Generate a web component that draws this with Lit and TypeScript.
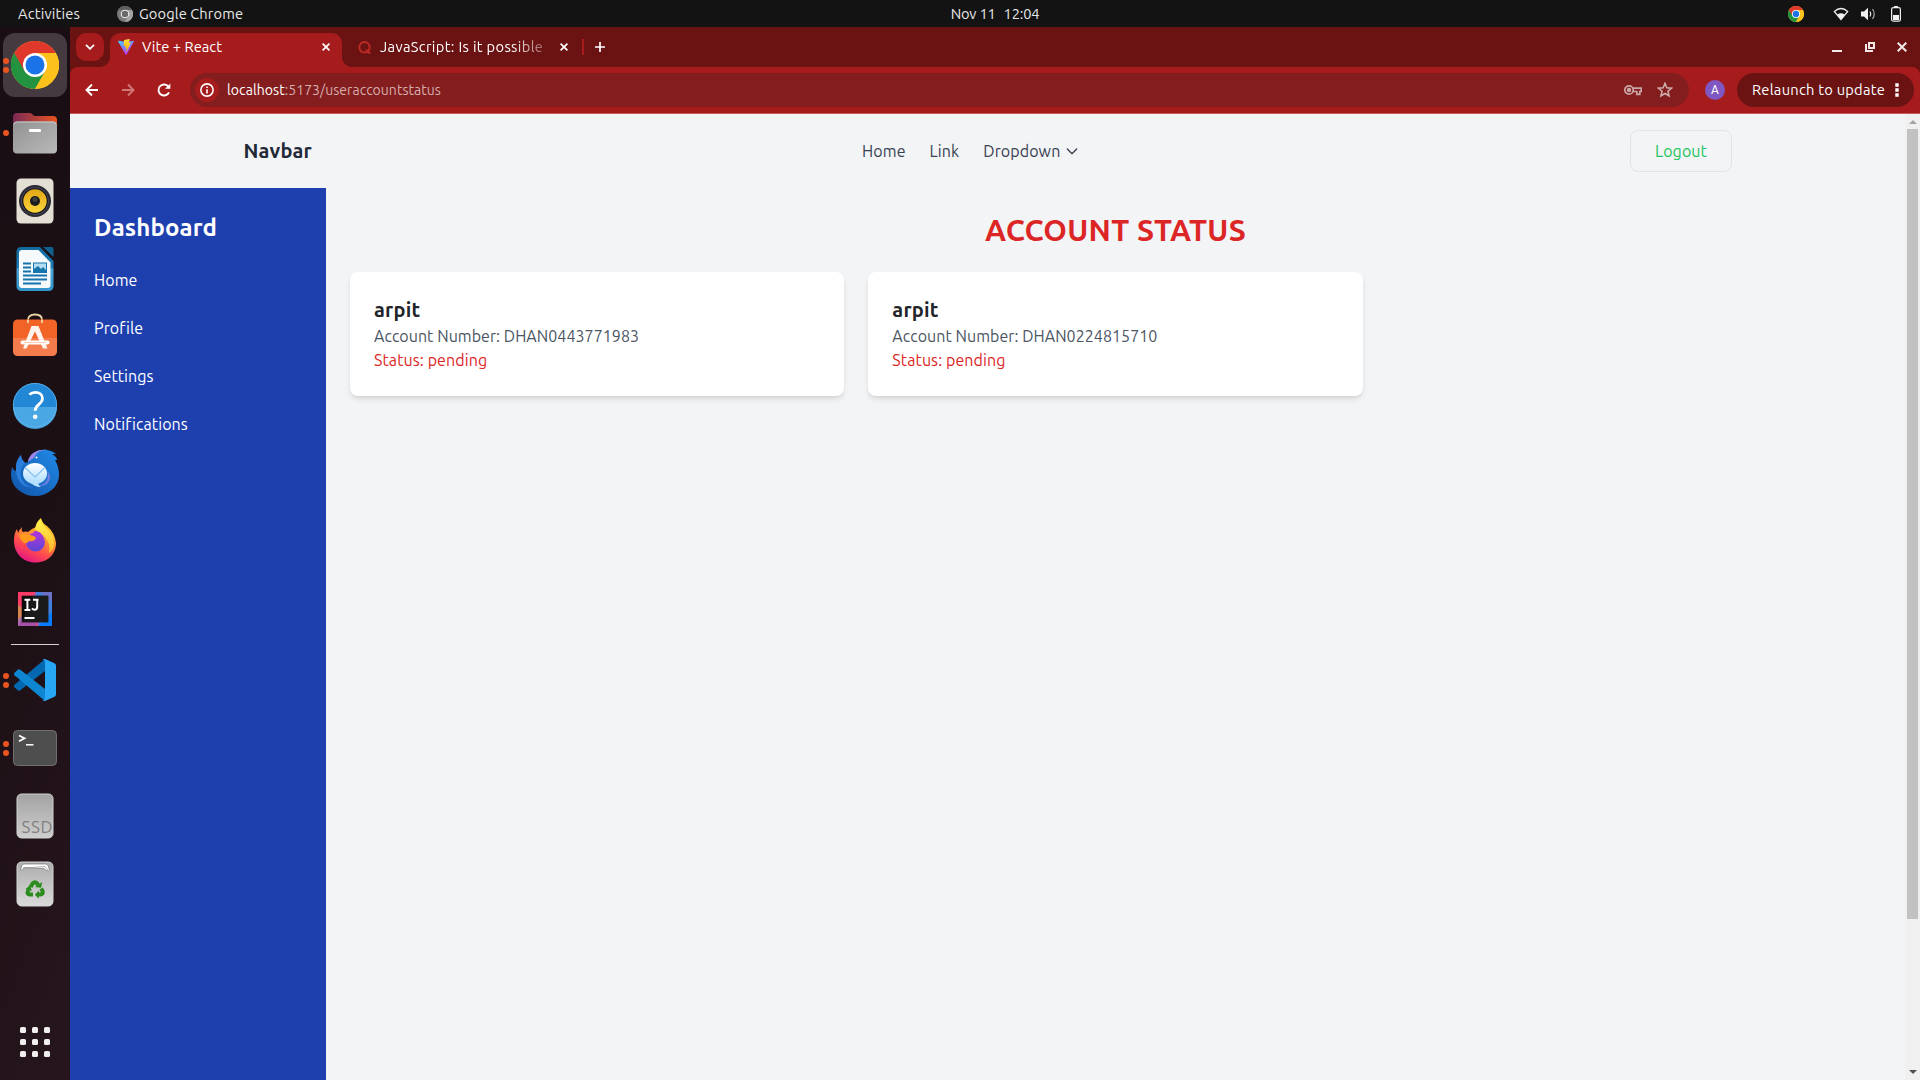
import { LitElement, html, css } from "lit";
import { customElement } from "lit/decorators.js";

const chromeMark = (size: number) => html`
  <svg width=${size} height=${size} viewBox="0 0 48 48">
    <circle cx="24" cy="24" r="24" fill="#fbc02a" />
    <path d="M3.2 12A24 24 0 0 0 24 48L34.4 30 24 24Z" fill="#24933f" />
    <path d="M3.2 12A24 24 0 0 1 44.8 12H24L13.6 30Z" fill="#e0392c" />
    <path d="M24 12H44.8A24 24 0 0 1 24 48L34.4 30Z" fill="#fcc21b" />
    <circle cx="24" cy="24" r="12" fill="#fff" />
    <circle cx="24" cy="24" r="9.5" fill="#1a73e8" />
  </svg>`;

const dockIcons: Record<string, unknown> = {
  chrome: chromeMark(48),
  files: html`<svg width="48" height="48" viewBox="0 0 48 48">
    <defs>
      <linearGradient id="fa"><stop offset="0" stop-color="#7a2a55" /><stop offset="1" stop-color="#e95420" /></linearGradient>
      <linearGradient id="fb" x2="1" y2="1"><stop offset="0" stop-color="#929292" /><stop offset="1" stop-color="#b9b9b9" /></linearGradient>
    </defs>
    <path d="M2 20V8a4 4 0 0 1 4-4h13c2 0 3 3 5 3h18a4 4 0 0 1 4 4v9Z" fill="url(#fa)" />
    <rect x="2" y="12.500" width="44" height="32" rx="4" fill="url(#fb)" />
    <path d="M3 15.500a3 3 0 0 1 3-2.500h36a3 3 0 0 1 3 2.500" fill="none" stroke="#c9c9c9" />
    <rect x="18" y="20" width="12" height="3" rx="1" fill="#fff" />
  </svg>`,
  music: html`<svg width="48" height="48" viewBox="0 0 48 48">
    <defs><linearGradient id="ma" x2="0" y2="1"><stop offset="0" stop-color="#e2a616" /><stop offset="1" stop-color="#fbd53c" /></linearGradient></defs>
    <rect x="5.500" y="1.500" width="37" height="45" rx="4.500" fill="#e3dfd5" />
    <circle cx="24" cy="24" r="16" fill="#2b2a35" />
    <circle cx="24" cy="24" r="13.500" fill="#15151c" stroke="#4a4a5a" />
    <circle cx="24" cy="24" r="11.700" fill="url(#ma)" />
    <circle cx="24" cy="24" r="5" fill="#1c1c1c" />
    <circle cx="24" cy="22.500" r="2.500" fill="#3c3c3c" />
  </svg>`,
  writer: html`<svg width="48" height="48" viewBox="0 0 48 48">
    <defs><linearGradient id="wa" x2="0" y2="1"><stop offset="0" stop-color="#116a9d" /><stop offset=".48" stop-color="#1c7eb5" /><stop offset=".5" stop-color="#4ba5d3" /><stop offset="1" stop-color="#3294c8" /></linearGradient></defs>
    <path d="M10 2h19l13.500 14v25.500a4.500 4.500 0 0 1-4.500 4.500H10a4.500 4.500 0 0 1-4.500-4.500v-35A4.500 4.500 0 0 1 10 2Z" fill="url(#wa)" />
    <path d="M11 5h16.500L39.500 17.500V40a3 3 0 0 1-3 3H11a3 3 0 0 1-3-3V8a3 3 0 0 1 3-3Z" fill="#f7fafc" />
    <path d="M32 2h8.500a2 2 0 0 1 2 2v8Z" fill="#11618f" />
    <path d="M12 18.500h8M12 22.500h8M12 26.500h8M12 30.500h24M12 34.500h24M12 38.500h18" stroke="#1474ab" stroke-width="2" />
    <rect x="22.500" y="18" width="13" height="9.500" fill="#b5dcf0" stroke="#1474ab" />
    <path d="M23 27v-3l4-3 3 3 2-2 3 3v2Z" fill="#1474ab" />
  </svg>`,
  software: html`<svg width="48" height="48" viewBox="0 0 48 48">
    <path d="M17 11V7q0-5.500 7-5.500T31 7v4" fill="none" stroke="#ead7a4" stroke-width="1.800" />
    <path d="M6.500 6.500h35a4.500 4.500 0 0 1 4.500 4.500v14H2V11a4.500 4.500 0 0 1 4.500-4.500Z" fill="#f26328" />
    <path d="M2 25h44v13.500a4.500 4.500 0 0 1-4.500 4.500h-35A4.500 4.500 0 0 1 2 38.500Z" fill="#f47c4c" />
    <path d="M17 10V7M31 10V7" stroke="#ead7a4" stroke-width="1.800" />
    <path d="M20.500 13h7l9 22.500h-4.500L24 18.500 15.500 35.500H12Z" fill="#fff3ec" />
    <path d="M11.500 29.500h25" stroke="#fff" stroke-width="4" stroke-linecap="round" />
    <path d="M13 29.500h22" stroke="#f9c0a6" stroke-width=".8" />
  </svg>`,
  help: html`<svg width="48" height="48" viewBox="0 0 48 48">
    <circle cx="24" cy="24" r="22" fill="#2287d4" />
    <path d="M2 26a22 22 0 0 0 44 0Z" fill="#49a7e3" />
    <circle cx="24" cy="24" r="21.600" fill="none" stroke="#63b5ea" stroke-width=".8" />
    <path d="M18.300 13.500q2.700-2.200 6-2.200c4.500 0 7.200 2.500 7.200 6.200 0 5.500-7.400 6.300-7.400 12.200" fill="none" stroke="#fff" stroke-width="2.700" />
    <circle cx="24.200" cy="35.800" r="2.300" fill="#fff" />
  </svg>`,
  thunderbird: html`<svg width="48" height="48" viewBox="0 0 48 48">
    <defs><linearGradient id="ta" x1="1" x2="0" y2="1"><stop offset="0" stop-color="#1f8be8" /><stop offset="1" stop-color="#1253a8" /></linearGradient>
    <linearGradient id="tb" x2="0" y2="1"><stop offset="0" stop-color="#fff" /><stop offset="1" stop-color="#a9dcff" /></linearGradient></defs>
    <path d="M1 18q1 3 4 4Q4 12 10 6q0 4 4 8l3-1C18 5 26 0 36 1q6 1 9 4h-4q5 3 5 6h-2q4 7 4 15a24 21 0 0 1-48 0q0-4 1-8Z" fill="url(#ta)" />
    <path d="M5 22Q4 12 10 6q0 4 4 8c-5 4-6 12-2 18 3 4 6 6 11 6-10 2-17-5-18-16Z" fill="#2b7fdc" />
    <path d="M17 13C18 5 26 0 36 1c-8 0-11 3-13 8-2 1-4 2-6 4Z" fill="#9a86ea" />
    <path d="M36 22c3 8-2 14-8 14 2 1 4 1 6 0 6-3 7-10 2-14Z" fill="#8b83e8" opacity=".75" />
    <ellipse cx="24" cy="24.500" rx="12" ry="10.500" fill="url(#tb)" />
    <path d="M19 33q4 5 11 5-3-2-3-5Z" fill="#b4e0ff" />
    <path d="M14 18.500 24 28 34 18.500" fill="none" stroke="#8fc4ee" stroke-width="1.300" />
    <circle cx="25.500" cy="8.500" r="1" fill="#fff" />
  </svg>`,
  firefox: html`<svg width="48" height="48" viewBox="0 0 48 48">
    <defs>
      <linearGradient id="xa" x1=".8" x2=".3" y2="1"><stop offset="0" stop-color="#ffe226" /><stop offset=".4" stop-color="#ff9a30" /><stop offset=".7" stop-color="#ff4a4f" /><stop offset="1" stop-color="#e31587" /></linearGradient>
      <linearGradient id="xb" x2="0" y2="1"><stop offset="0" stop-color="#b037d8" /><stop offset="1" stop-color="#5b46d6" /></linearGradient>
      <linearGradient id="xc" x2="0" y2="1"><stop offset="0" stop-color="#fff44f" /><stop offset="1" stop-color="#ffb52d" /></linearGradient>
    </defs>
    <path d="M3 24q0-8 3-12l1 4q2-4 4-6-1 4 1 5 3-1 5 0 3-3 8-5 0-5 5-9 1 5 6 8 8 7 9 17C45 38 36 45.500 24 45.500S3 36 3 24Z" fill="url(#xa)" />
    <path d="M24 12q1-7 6-10 0 4 5 9 6 6 7 8l1 7q0 7-5 10 2-10-5-17-5-3-9-7Z" fill="url(#xc)" />
    <circle cx="24.500" cy="25" r="9.500" fill="url(#xb)" />
    <path d="M8 17q7-2 11 1 5 1 6 3-2 4-7 3-2 3-5 2-4-3-5-9Z" fill="#ff9a1f" />
    <path d="M24 14q6 0 8 6-3-2-6-1-1-3-4-4Z" fill="#a435e0" />
  </svg>`,
  intellij: html`<svg width="48" height="48" viewBox="0 0 48 48">
    <rect x="7" y="7" width="34" height="34" fill="#cf4d8e" />
    <path d="M25 7h16v34H28L22 24Z" fill="#3f7fe0" />
    <path d="M29 7h12v10Z" fill="#6c71c8" />
    <path d="M7 7h17L12 24 7 20Z" fill="#fe3b66" />
    <path d="M7 20l6 4 3 17H7Z" fill="#a66fb0" /><path d="M7 20l4 3v8l-4 4Z" fill="#d9854f" />
    <path d="M7 41h18v-5H10Z" fill="#a94fa8" />
    <path d="M41 27v14H27Z" fill="#087cfa" />
    <rect x="10.700" y="10.700" width="26.600" height="26.600" fill="#0c0c0c" />
    <path d="M22 10.700h15.300V37.300H10.700Z" fill="#242424" opacity=".6" />
    <path d="M13.500 14.800h5.800M13.500 25h5.800M16.400 14.500v10.700M22 14.800h5.500M26.200 14.500v7.200q0 3-2.700 3-1.500 0-2.500-1.400" fill="none" stroke="#fff" stroke-width="2" />
    <path d="M13.500 33h10" stroke="#fff" stroke-width="2" />
  </svg>`,
  vscode: html`<svg width="48" height="48" viewBox="0 0 48 48">
    <path d="M34 3v12L9 34.500q-1.200.6-2.300-.3L3.500 31.300q-1-1.300 0-2.500Z" fill="#0468b0" />
    <path d="M3.500 16.700 6.700 13.800q1.100-.9 2.300-.3L34 33v12L3.500 19.200q-1-1.200 0-2.500Z" fill="#0f86d2" />
    <path d="M34 3l9.500 4.300q1.500.8 1.500 2.400v28.600q0 1.600-1.500 2.400L34 45q-1.500.3-2.500-.7 2.300.4 2.500-2V5.700q-.2-2.400-2.500-2Q32.500 2.700 34 3Z" fill="#27a7f4" />
  </svg>`,
  terminal: html`<svg width="48" height="48" viewBox="0 0 48 48">
    <rect x="2.500" y="6.500" width="43" height="35" rx="4" fill="#4e4e4e" stroke="#6f6f6f" />
    <path d="M8 11.500l5.500 2.800L8 17.200" fill="none" stroke="#fff" stroke-width="1.800" />
    <path d="M15 20.800h7.500" stroke="#fff" stroke-width="1.500" />
  </svg>`,
  ssd: html`<svg width="48" height="48" viewBox="0 0 48 48">
    <defs><linearGradient id="sa" x2="0" y2="1"><stop offset="0" stop-color="#a3a3a3" /><stop offset="1" stop-color="#cecece" /></linearGradient></defs>
    <rect x="6" y="2" width="36" height="44" rx="4.500" fill="url(#sa)" stroke="#d2d2d2" />
    <text x="10.500" y="41" class="ssd-label" textLength="31">SSD</text>
  </svg>`,
  trash: html`<svg width="48" height="48" viewBox="0 0 48 48">
    <defs><linearGradient id="ra" x2="0" y2="1"><stop offset="0" stop-color="#adadad" /><stop offset="1" stop-color="#dadada" /></linearGradient></defs>
    <rect x="6" y="2" width="36" height="44" rx="4.500" fill="url(#ra)" stroke="#d5d5d5" />
    <path d="M9.500 10 11 5.500q.3-1.500 2-1.500h22q1.500 0 2 1.500L38.500 10q-1 1.500-3 .5L33 8.500 13 7.500 11 10.500Z" fill="#fff" stroke="#777" stroke-width=".7" />
    <path d="M12 8l22-1.500 3 3.500" fill="none" stroke="#999" stroke-width=".7" />
    <g fill="none" stroke="#2a8c1c" stroke-width="4">
      <path d="M19.600 27 21.800 23.300q2.200-2.300 4.200 0l1.200 2" />
      <path d="M30.200 28.500l1.400 2.700q.8 3-2 3.300h-2.600" />
      <path d="M22 34.500h-3.500q-2.800-.5-1.600-3.200l.8-1.400" />
    </g>
    <g fill="#2a8c1c">
      <path d="M24 27l6 .8 1.300-5.800Z" /><path d="M27.800 30.500v8.200l-4-4Z" /><path d="M14.300 29.300l6.400 1.700-1.500-6Z" />
    </g>
  </svg>`,
};

type DockEntry = { name: string; windows?: number; active?: boolean };
const pinned: DockEntry[] = [
  { name: "chrome", windows: 2, active: true },
  { name: "files", windows: 1 },
  { name: "music" }, { name: "writer" }, { name: "software" }, { name: "help" },
  { name: "thunderbird" }, { name: "firefox" }, { name: "intellij" },
];
const running: DockEntry[] = [
  { name: "vscode", windows: 2 }, { name: "terminal", windows: 2 }, { name: "ssd" }, { name: "trash" },
];

const base = css`
  :host { display: block; box-sizing: border-box; }
  *, *::before, *::after { box-sizing: border-box; }
  h1, h2, h3, p, ul { margin: 0; padding: 0; }
  svg { display: block; flex: none; }
`;

@customElement("top-panel")
class TopPanel extends LitElement {
  static styles = [base, css`
    :host { display: grid; grid-template-columns: 1fr auto 1fr; align-items: center; height: 27px; padding-right: 19px;
      background: #131313; color: #e8e8e8; font-size: 14.67px; line-height: 26px; }
    .left { display: flex; align-items: center; padding-left: 18px; }
    .activities { width: 99px; letter-spacing: 0.2px; }
    .app { margin-left: 6px; letter-spacing: 0.1px; }
    .clock { display: flex; gap: 8px; padding-left: 89px; letter-spacing: -0.2px; }
    .right { display: flex; justify-content: flex-end; align-items: center; }
    .wifi { margin-left: 29px; }
    .volume { margin-left: 12px; }
    .battery { margin-left: 15px; }
  `];
  render() {
    return html`
      <div class="left">
        <span class="activities">Activities</span>
        <svg width="16" height="16" viewBox="0 0 16 16">
          <circle cx="8" cy="8" r="8" fill="#7b7b7b" />
          <path d="M1 4a8 8 0 0 1 14 0H8Z" fill="#5e5e5e" /><path d="M8 16a8 8 0 0 0 7-12H8l3.500 6Z" fill="#a4a4a4" />
          <circle cx="8" cy="8" r="4.300" fill="#eee" /><circle cx="8" cy="8" r="3.200" fill="#6a6a6a" />
        </svg>
        <span class="app">Google Chrome</span>
      </div>
      <div class="clock"><span>Nov 11</span><span>12:04</span></div>
      <div class="right">
        ${chromeMark(16)}
        <svg class="wifi" width="16" height="14" viewBox="0 0 16 14">
          <path d="M1.300 4.500Q8-1.500 14.700 4.500L8 12.500Z" fill="none" stroke="#eee" stroke-width="1.200" />
          <path d="M4.300 7.500Q8 5 11.700 7.500L8 12.800Z" fill="#f2f2f2" />
        </svg>
        <svg class="volume" width="15" height="14" viewBox="0 0 15 14">
          <path d="M0 4.500h3L7 .8v12.400L3 9.500H0Z" fill="#f2f2f2" />
          <path d="M9 4.500q1.600 2.500 0 5" fill="none" stroke="#eee" stroke-width="1.200" />
          <path d="M11.500 2q3.500 5 0 10" fill="none" stroke="#aaa" stroke-width="1.200" />
        </svg>
        <svg class="battery" width="10" height="16" viewBox="0 0 10 16">
          <path d="M3 0h4v2H3Z" fill="#eee" />
          <rect x=".6" y="1.600" width="8.800" height="13.600" rx="1.800" fill="none" stroke="#eee" stroke-width="1.200" />
          <rect x="2" y="9" width="6" height="5" fill="#f2f2f2" />
        </svg>
      </div>`;
  }
}

@customElement("app-dock")
class AppDock extends LitElement {
  static styles = [base, css`
    :host { display: flex; flex-direction: column; align-items: center; padding: 4px 0 20px;
      background: linear-gradient(110deg, rgba(38, 21, 29, 0) 50%, #26151d 100%), linear-gradient(#190e13, #1f1217); }
    .slot { position: relative; display: flex; flex: none; align-items: center; justify-content: center; width: 100%; height: 68px; }
    .tile { display: grid; place-items: center; width: 64px; height: 64px; border-radius: 12px; }
    .active .tile { background: #443a40; }
    .dots { position: absolute; left: 3px; top: 0; height: 100%; display: flex; flex-direction: column; justify-content: center; gap: 3px; }
    .dot { width: 6px; height: 6px; border-radius: 50%; background: #e95420; }
    .rule { width: 48px; height: 1px; margin: 1px 0; background: #d5d1d3; }
    .ssd-label { font: 17px "Ubuntu", "Noto Sans", sans-serif; fill: #808080; }
    .grid { display: grid; grid-template-columns: repeat(3, 6px); gap: 6px; margin-top: auto; margin-bottom: 3px; }
    .grid i { height: 6px; border-radius: 1.5px; background: #f2f0ee; }
  `];
  slotFor(e: DockEntry) {
    return html`<div class="slot ${e.active ? "active" : ""}">
      <div class="dots">${Array.from({ length: e.windows ?? 0 }, () => html`<span class="dot"></span>`)}</div>
      <div class="tile">${dockIcons[e.name]}</div>
    </div>`;
  }
  render() {
    return html`${pinned.map(e => this.slotFor(e))}
      <div class="rule"></div>
      ${running.map(e => this.slotFor(e))}
      <div class="grid">${Array.from({ length: 9 }, () => html`<i></i>`)}</div>`;
  }
}

const cross = html`<svg width="8" height="8" viewBox="0 0 8 8"><path d="M.6.6l6.800 6.800M7.400.6L.6 7.400" stroke="#fff" stroke-width="1.700" /></svg>`;

@customElement("browser-chrome")
class BrowserChrome extends LitElement {
  static styles = [base, css`
    :host { height: 87px; background: #6b1212; color: #fff; }
    .tabs { display: flex; align-items: center; height: 40px; padding: 0 13px 0 6px; font-size: 14.67px; }
    .search { display: grid; place-items: center; width: 28px; height: 28px; border-radius: 10px; background: #a61c1d; }
    .tab { display: flex; align-items: center; align-self: flex-end; height: 34px; padding-bottom: 6px; }
    .tab.current { position: relative; width: 232px; margin-left: 6px; padding: 0 12px 6px 8px; border-radius: 10px 10px 0 0; background: #a61c1d; }
    .current::before, .current::after { content: ""; position: absolute; bottom: 0; width: 10px; height: 10px; }
    .current::before { left: -10px; background: radial-gradient(circle at 0 0, #6b1212 9.6px, #a61c1d 10.2px); }
    .current::after { right: -10px; background: radial-gradient(circle at 100% 0, #6b1212 9.6px, #a61c1d 10.2px); }
    .title { flex: 1; margin-left: 8px; padding-bottom: 2px; white-space: nowrap; letter-spacing: 0.05px; }
    .tab.other { width: 240px; padding-left: 16px; }
    .other .title { margin-left: 9px; margin-right: 12px; flex: 0 0 168px; letter-spacing: 0.34px;
      -webkit-mask: linear-gradient(90deg, #000 78%, rgba(0, 0, 0, 0.25) 100%); mask: linear-gradient(90deg, #000 78%, rgba(0, 0, 0, 0.25) 100%); }
    .divider { width: 2px; height: 16px; background: #a61c1d; }
    .plus { margin-left: 11px; }
    .controls { display: flex; align-items: center; gap: 22.5px; margin-left: auto; }
    .bar { display: flex; align-items: center; height: 47px; padding: 6px 6px 7px 14px; border-bottom: 1px solid #c75a5b; border-radius: 8px 8px 0 0; background: #a61c1d; }
    .forward { margin: 0 20px 0 20px; }
    .url { display: flex; align-items: center; flex: 1; height: 34px; margin-left: 18px; padding: 0 16px 0 5px; border-radius: 17px; background: #841d1e; font-size: 14px; }
    .info { display: grid; place-items: center; width: 24px; height: 24px; border-radius: 50%; background: #a61c1d; }
    .host { margin-left: 8px; letter-spacing: 0.1px; }
    .path { flex: 1; color: #d5aeae; letter-spacing: 0.03px; }
    .star { margin-left: 15px; }
    .avatar { display: grid; place-items: center; width: 20px; height: 20px; margin: 0 12px 0 16px; border-radius: 50%; background: #7e57c2; font: 12px/20px "Roboto", sans-serif; }
    .relaunch { display: flex; align-items: center; width: 177px; height: 34px; padding-left: 15px; border-radius: 17px; background: #6b1212; font-size: 14.67px; letter-spacing: 0.26px; white-space: nowrap; }
    .menu { margin-left: auto; margin-right: 15px; }
  `];
  render() {
    return html`
      <div class="tabs">
        <div class="search"><svg width="10" height="6" viewBox="0 0 10 6"><path d="M1 .8l4 4 4-4" fill="none" stroke="#fff" stroke-width="1.800" /></svg></div>
        <div class="tab current">
          <svg width="16" height="16" viewBox="0 0 16 16">
            <defs><linearGradient id="va" x2=".5" y2="1"><stop offset="0" stop-color="#41d1ff" /><stop offset="1" stop-color="#bd34fe" /></linearGradient>
            <linearGradient id="vb" x2="0" y2="1"><stop offset="0" stop-color="#ffea83" /><stop offset=".1" stop-color="#ffdd35" /><stop offset="1" stop-color="#ffa800" /></linearGradient></defs>
            <path d="M15.900 2.500 8.500 15.700a.5.500 0 0 1-.8 0L.1 2.500a.5.500 0 0 1 .5-.7L8 3.100l7.400-1.300a.5.500 0 0 1 .5.700Z" fill="url(#va)" />
            <path d="M11.600 0 6.200 1.100a.2.200 0 0 0-.2.200l-.3 5.600a.2.200 0 0 0 .3.200l1.500-.3a.2.200 0 0 1 .2.200l-.4 2.200a.2.200 0 0 0 .2.200l1-.3a.2.200 0 0 1 .2.200l-.7 3.500c0 .2.200.3.300.1l4.500-9a.2.200 0 0 0-.2-.3l-1.600.3a.2.200 0 0 1-.2-.2L11.800.2a.2.200 0 0 0-.2-.2Z" fill="url(#vb)" />
          </svg>
          <span class="title">Vite + React</span>${cross}
        </div>
        <div class="tab other">
          <svg width="13" height="13" viewBox="0 0 13 13"><circle cx="6.500" cy="6.300" r="5.200" fill="none" stroke="#b92b27" stroke-width="2" /><path d="M8 8.500l2.300 3.300H12.500" fill="none" stroke="#b92b27" stroke-width="2" /></svg>
          <span class="title">JavaScript: Is it possible</span>${cross}
        </div>
        <div class="divider"></div>
        <svg class="plus" width="10" height="10" viewBox="0 0 10 10"><path d="M5 0v10M0 5h10" stroke="#fff" stroke-width="1.700" /></svg>
        <div class="controls">
          <svg width="10" height="10" viewBox="0 0 10 10"><path d="M0 9h10" stroke="#f3e8e8" stroke-width="2" /></svg>
          <svg width="10" height="10" viewBox="0 0 10 10"><path d="M4 1h5v5H4ZM1 2v7h7" fill="none" stroke="#f3e8e8" stroke-width="2" /></svg>
          <svg width="10" height="10" viewBox="0 0 10 10"><path d="M.7.7l8.600 8.600M9.300.7L.7 9.300" stroke="#f3e8e8" stroke-width="2" /></svg>
        </div>
      </div>
      <div class="bar">
        <svg width="16" height="16" viewBox="0 0 16 16"><path d="M14 8H3M8 2.500L2.500 8 8 13.500" fill="none" stroke="#fff" stroke-width="1.900" /></svg>
        <svg class="forward" width="16" height="16" viewBox="0 0 16 16"><path d="M2 8h11M8 2.500L13.500 8 8 13.500" fill="none" stroke="#d07777" stroke-width="1.900" /></svg>
        <svg width="16" height="16" viewBox="0 0 16 16"><path d="M13 10.300A5.500 5.500 0 1 1 12 4.200L13.500 6" fill="none" stroke="#fff" stroke-width="1.900" /><path d="M14.300 1.500v5.300H9Z" fill="#fff" /></svg>
        <div class="url">
          <div class="info"><svg width="14" height="14" viewBox="0 0 14 14"><circle cx="7" cy="7" r="6.100" fill="none" stroke="#fff" stroke-width="1.600" /><path d="M7 6.200v4.300M7 3.400v1.600" stroke="#fff" stroke-width="1.600" /></svg></div>
          <span class="host">localhost</span><span class="path">:5173/useraccountstatus</span>
          <svg width="18" height="12" viewBox="0 0 18 12" fill="none" stroke="#c9a5a5" stroke-width="1.700"><circle cx="5" cy="6" r="4.200" /><circle cx="5" cy="6" r="1.400" fill="#c9a5a5" /><path d="M9 4.200h8.200v3.300h-1.400v2.800h-3V7.500H9" /></svg>
          <svg class="star" width="16" height="16" viewBox="0 0 16 16"><path d="M8 1.300l1.800 4.500 4.800.4-3.700 3.100 1.200 4.700L8 11.500 3.900 14l1.200-4.700L1.400 6.200l4.800-.4Z" fill="none" stroke="#cfaeae" stroke-width="1.500" /></svg>
        </div>
        <div class="avatar">A</div>
        <div class="relaunch">Relaunch to update
          <svg class="menu" width="4" height="14" viewBox="0 0 4 14"><path d="M.3.3h3.400v3.400H.3ZM.3 5.300h3.400v3.400H.3ZM.3 10.300h3.400v3.400H.3Z" fill="#fff" /></svg>
        </div>
      </div>`;
  }
}

@customElement("account-page")
class AccountPage extends LitElement {
  static styles = [base, css`
    :host { display: flex; flex: 1; min-height: 0; background: #f3f4f6; font-size: 16px; line-height: 24px; }
    .page { flex: 1; display: flex; flex-direction: column; }
    nav { display: flex; align-items: center; justify-content: space-between; width: 1536px; height: 74px; margin: 0 auto; padding: 0 23.5px 0 24px; color: #374151; }
    .brand { width: 69px; font-size: 20px; font-weight: 700; color: #1f2937; letter-spacing: 0.2px; }
    .links { display: flex; gap: 24px; letter-spacing: 0.1px; }
    .drop { display: flex; align-items: center; gap: 4px; }
    .logout { height: 42px; padding: 8px 24px; border: 1px solid #e2e4e8; border-radius: 8px; color: #22c55e; letter-spacing: 0.1px; }
    .body { flex: 1; display: flex; }
    aside { width: 256px; padding: 24px; background: #1e40af; color: #fff; }
    aside h2 { font-size: 24px; line-height: 32px; font-weight: 700; margin-bottom: 24px; letter-spacing: 0.13px; }
    aside li { list-style: none; margin-bottom: 24px; letter-spacing: 0.08px; }
    main { flex: 1; padding: 24px; }
    h1 { font-size: 30px; line-height: 36px; font-weight: 700; text-align: center; color: #dc2626; margin-bottom: 24px; letter-spacing: 0.3px; }
    .cards { display: grid; grid-template-columns: repeat(3, 1fr); gap: 24px; }
    .card { height: 124px; padding: 24px; border-radius: 8px; background: #fff; color: #4b5563; letter-spacing: 0.05px;
      box-shadow: 0 4px 6px -1px rgba(0, 0, 0, 0.1), 0 2px 4px -2px rgba(0, 0, 0, 0.1); }
    .card h3 { font-size: 20px; line-height: 28px; font-weight: 700; color: #212529; letter-spacing: 0.2px; }
    .card .status { color: #dc2626; letter-spacing: 0.1px; }
    .scroll { display: flex; flex-direction: column; align-items: center; justify-content: space-between; width: 15px; padding: 6px 2px; background: #f0f0f0; }
    .thumb { width: 11px; height: 790px; margin: 5px 0 auto; background: #c1c1c1; }
  `];
  render() {
    const accounts = ["DHAN0443771983", "DHAN0224815710"];
    return html`
      <div class="page">
        <nav>
          <span class="brand">Navbar</span>
          <div class="links">
            <span>Home</span><span>Link</span>
            <span class="drop">Dropdown
              <svg width="16" height="16" viewBox="0 0 24 24"><path d="M5 9l7 7 7-7" fill="none" stroke="#374151" stroke-width="2" stroke-linecap="round" stroke-linejoin="round" /></svg>
            </span>
          </div>
          <div class="logout">Logout</div>
        </nav>
        <div class="body">
          <aside>
            <h2>Dashboard</h2>
            <ul>${["Home", "Profile", "Settings", "Notifications"].map(t => html`<li>${t}</li>`)}</ul>
          </aside>
          <main>
            <h1>ACCOUNT STATUS</h1>
            <div class="cards">
              ${accounts.map(n => html`<section class="card"><h3>arpit</h3><p>Account Number: ${n}</p><p class="status">Status: pending</p></section>`)}
            </div>
          </main>
        </div>
      </div>
      <div class="scroll">
        <svg width="8" height="4" viewBox="0 0 8 4"><path d="M4 0l4 4H0Z" fill="#a3a3a3" /></svg>
        <div class="thumb"></div>
        <svg width="8" height="4" viewBox="0 0 8 4"><path d="M4 4L0 0h8Z" fill="#505050" /></svg>
      </div>`;
  }
}

@customElement("app-root")
class AppRoot extends LitElement {
  static styles = [base, css`
    :host { display: flex; flex-direction: column; width: 1920px; height: 1080px; overflow: hidden; font-family: "Ubuntu", "Noto Sans", sans-serif; }
    .desktop { flex: 1; display: flex; min-height: 0; }
    app-dock { width: 70px; }
    .window { flex: 1; display: flex; flex-direction: column; }
  `];
  render() {
    return html`<top-panel></top-panel>
      <div class="desktop">
        <app-dock></app-dock>
        <div class="window"><browser-chrome></browser-chrome><account-page></account-page></div>
      </div>`;
  }
}
